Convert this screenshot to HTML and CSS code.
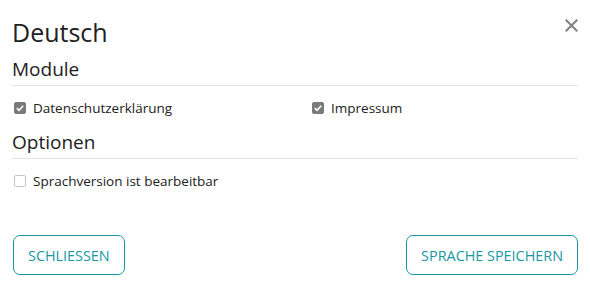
FILE: index.html
```html
<!DOCTYPE html>
<html lang="de">
<head>
<meta charset="utf-8">
<link rel="stylesheet" href="styles.css">
</head>
<body>
<div class="dialog">
  <div class="header">
    <h1 class="title">Deutsch</h1>
    <button class="close" aria-label="Schließen">
      <svg width="13" height="13" viewBox="0 0 13 13"><path d="M1.5 1.5 L11.5 11.5 M11.5 1.5 L1.5 11.5" stroke="#858585" stroke-width="2.2" stroke-linecap="square"/></svg>
    </button>
  </div>
  <h2 class="section">Module</h2>
  <div class="checks two">
    <label class="check"><span class="box on"><svg width="12" height="12" viewBox="0 0 12 12"><path d="M2.8 6.2 L5 8.3 L9.2 3.8" fill="none" stroke="#fff" stroke-width="1.6"/></svg></span>Datenschutzerklärung</label>
    <label class="check"><span class="box on"><svg width="12" height="12" viewBox="0 0 12 12"><path d="M2.8 6.2 L5 8.3 L9.2 3.8" fill="none" stroke="#fff" stroke-width="1.6"/></svg></span>Impressum</label>
  </div>
  <h2 class="section">Optionen</h2>
  <div class="checks">
    <label class="check"><span class="box"></span>Sprachversion ist bearbeitbar</label>
  </div>
  <div class="footer">
    <button class="btn">SCHLIESSEN</button>
    <button class="btn">SPRACHE SPEICHERN</button>
  </div>
</div>
</body>
</html>
```
FILE: styles.css
```css
html, body {
  margin: 0;
  padding: 0;
  background: #fff;
}
body {
  font-family: "Open Sans", "Noto Sans", sans-serif;
  color: #212121;
}
.dialog {
  width: 566px;
  padding: 14px 12px 0 12px;
}
.header {
  display: flex;
  justify-content: space-between;
  align-items: flex-start;
}
.title {
  margin: 0;
  font-size: 25px;
  font-weight: 400;
  line-height: 36px;
}
.close {
  border: 0;
  background: none;
  padding: 0;
  margin: 3px -2px 0 0;
  width: 17px;
  height: 17px;
  display: flex;
  align-items: center;
  justify-content: center;
}
.section {
  margin: 0;
  font-size: 19px;
  font-weight: 400;
  line-height: 26px;
  padding-top: 6px;
  padding-bottom: 3px;
  border-bottom: 1px solid #e3e3e3;
}
.checks {
  padding: 12px 0 5px 2px;
  display: grid;
}
.checks.two {
  grid-template-columns: 298px 1fr;
}
.check {
  display: flex;
  align-items: center;
  font-size: 13.5px;
  line-height: 20px;
}
.box {
  box-sizing: border-box;
  width: 12px;
  height: 12px;
  border-radius: 2px;
  border: 1px solid #c4c4c4;
  margin-right: 7px;
  display: inline-flex;
  align-items: center;
  justify-content: center;
}
.box.on {
  background: #7a7a7a;
  border-color: #7a7a7a;
}
.box svg {
  flex: none;
}
.footer {
  display: flex;
  justify-content: space-between;
  margin-top: 39px;
  padding-left: 1px;
}
.btn {
  font-family: "Open Sans", "Noto Sans", sans-serif;
  font-size: 14.4px;
  color: #1797a3;
  background: #fff;
  border: 1px solid #1797a3;
  border-radius: 7px;
  height: 40px;
  padding: 0 14px;
}
```
